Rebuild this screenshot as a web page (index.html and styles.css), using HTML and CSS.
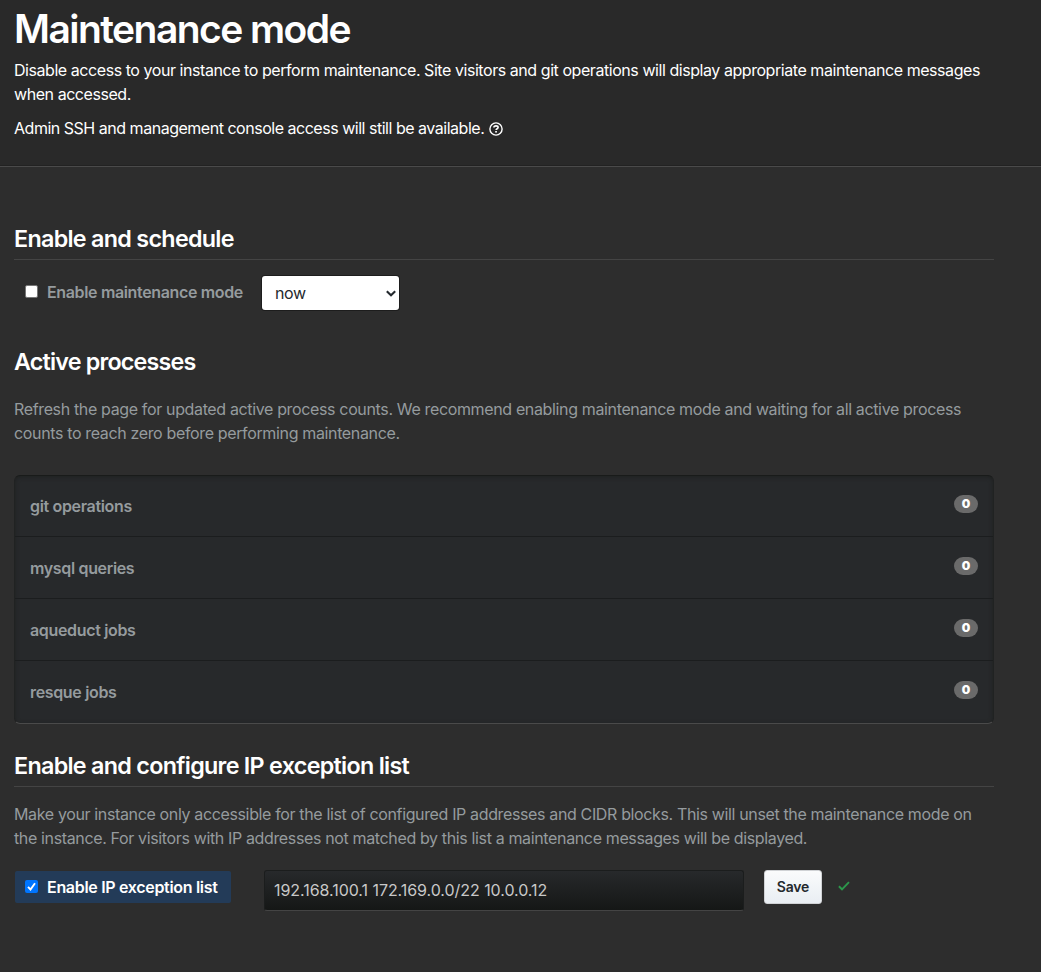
FILE: index.html
```html
<!DOCTYPE html>
<html lang="en">
<head>
<meta charset="utf-8">
<title>Maintenance mode</title>
<link rel="stylesheet" href="styles.css">
</head>
<body>
<header class="page-head">
  <h1 class="title">Maintenance mode</h1>
  <p class="lead">Disable access to your instance to perform maintenance. Site visitors and git operations will display appropriate maintenance messages<br>when accessed.</p>
  <p class="lead note">Admin SSH and management console access will still be available.
    <svg class="help" viewBox="0 0 14 14" width="14" height="14"><circle cx="7" cy="7" r="6.1" fill="none" stroke="currentColor" stroke-width="1.4"/><path d="M4.9 5.6C4.9 4.4 5.9 3.9 7 3.9s2.1.6 2.1 1.6C9.1 6.8 7.1 6.7 7.1 8.1" fill="none" stroke="currentColor" stroke-width="1.6"/><rect x="6.2" y="9" width="1.7" height="1.6" fill="currentColor"/></svg>
  </p>
</header>
<main class="content">
  <section class="schedule">
    <h2 class="heading ruled">Enable and schedule</h2>
    <div class="row">
      <label class="toggle"><span class="box"></span><span class="toggle-text">Enable maintenance mode</span></label>
      <div class="select"><span>now</span><svg width="10" height="7" viewBox="0 0 10 7"><path d="M.8 1.2l4.2 4 4.2-4" fill="none" stroke="currentColor" stroke-width="2.1"/></svg></div>
    </div>
  </section>
  <section class="processes">
    <h2 class="heading narrow">Active processes</h2>
    <p class="text t-processes">Refresh the page for updated active process counts. We recommend enabling maintenance mode and waiting for all active process<br>counts to reach zero before performing maintenance.</p>
    <ul class="list">
      <li class="item"><span>git operations</span><b class="count">0</b></li>
      <li class="item"><span>mysql queries</span><b class="count">0</b></li>
      <li class="item"><span>aqueduct jobs</span><b class="count">0</b></li>
      <li class="item"><span>resque jobs</span><b class="count">0</b></li>
    </ul>
  </section>
  <section class="exceptions">
    <h2 class="heading ruled">Enable and configure IP exception list</h2>
    <p class="text t-exceptions">Make your instance only accessible for the list of configured IP addresses and CIDR blocks. This will unset the maintenance mode on<br>the instance. For visitors with IP addresses not matched by this list a maintenance messages will be displayed.</p>
    <div class="form">
      <label class="toggle active"><span class="box checked"><svg width="13" height="13" viewBox="0 0 13 13"><path d="M3 6.9l2.5 2.6L10 3.2" fill="none" stroke="#fff" stroke-width="1.9"/></svg></span><span class="toggle-text">Enable IP exception list</span></label>
      <div class="field">192.168.100.1 172.169.0.0/22 10.0.0.12</div>
      <button class="save">Save</button>
      <svg class="ok" width="12" height="10" viewBox="0 0 12 10"><path d="M.9 5.3l3.1 3L11 1.2" fill="none" stroke="#2c974b" stroke-width="1.9"/></svg>
    </div>
  </section>
</main>
</body>
</html>
```

FILE: styles.css
```css
* { box-sizing: border-box; }
body {
  margin: 0;
  min-height: 972px;
  background: #2d2d2d;
  color: #959b9e;
  font: 16px/24px Inter, "Liberation Sans", sans-serif;
  white-space: nowrap;
}
h1, h2, p, ul { margin: 0; padding: 0; }
.page-head {
  height: 167px;
  padding: 5px 14px 0;
  background: #292929;
  border-bottom: 1px solid #4a4a4a;
  box-shadow: inset 0 -1px #222;
  color: #fff;
}
.title { height: 50px; font-size: 39px; line-height: 48px; font-weight: 600; letter-spacing: -1.55px; }
.lead { margin-top: 3px; letter-spacing: -0.442px; }
.note { display: flex; align-items: center; gap: 5px; margin-top: 10px; letter-spacing: -0.48px; }
.help { margin-top: 2px; }
.content { width: 994px; padding-left: 14px; }
.schedule { padding-top: 56px; }
.heading { height: 32px; color: #fff; font-size: 23.3px; line-height: 32px; font-weight: 600; letter-spacing: -0.7px; }
.narrow { letter-spacing: -0.8px; }
.ruled { height: 37px; border-bottom: 1px solid #444; }
.row { display: flex; height: 52px; padding: 16px 0 0 1px; }
.toggle { display: flex; align-items: center; height: 32px; padding-left: 10px; font-weight: 600; letter-spacing: -0.35px; }
.box { width: 13px; height: 13px; margin-right: 9px; background: #fff; border: 1px solid #767676; border-radius: 2px; }
.box { margin-top: -1px; }
.row .toggle { width: 247px; }
.select {
  display: flex; align-items: center; justify-content: space-between;
  width: 137px; height: 34px; padding: 0 3px 0 13px;
  background: #fff; color: #24292e; border-radius: 3px;
  box-shadow: 0 0 0 1px #1d1d1d; letter-spacing: -0.4px;
}
.processes { padding-top: 34px; }
.text { letter-spacing: -0.355px; }
.t-processes { margin-top: 19px; }
.list {
  margin-top: 30px; height: 249px; list-style: none;
  background: #27292b; border: 1px solid #202222; border-top-color: #191b1a; border-bottom-color: #4a4a4a;
  border-radius: 6px; box-shadow: inset 0 1px 4px #1f2120;
}
.item { display: flex; justify-content: space-between; height: 62px; padding: 19px 15px 0; font-weight: 600; letter-spacing: -0.34px; border-bottom: 1px solid #1b1d1e; }
.item:first-child { height: 61px; padding-top: 18px; }
.item:last-child { border-bottom: 0; }
.count { width: 24px; height: 18px; margin-top: 1px; border-radius: 9px; background: #6a6a6a; color: #fff; font-size: 12px; line-height: 18px; text-align: center; letter-spacing: 0; }
.exceptions { padding-top: 26px; }
.t-exceptions { margin-top: 15px; letter-spacing: -0.36px; }
.form { display: flex; align-items: flex-start; margin-top: 20px; }
.active { width: 216px; margin: 1px 33px 0 1px; background: #233b58; border-radius: 2px; color: #fff; letter-spacing: -0.31px; }
.checked { background: #0075ff; border: 0; }
.checked svg { display: block; }
.field {
  width: 480px; height: 41px; padding: 0 9px; font-size: 16px; line-height: 38px; color: #c8c8c8; letter-spacing: -0.05px;
  background: linear-gradient(#27292b, #151716); border: 1px solid #1b1d1d; border-bottom-color: #444; border-radius: 3px;
}
.save {
  width: 58px; height: 34px; margin-left: 20px; padding: 0; border: 1px solid #d0d2d5; border-radius: 3px;
  background: linear-gradient(#fafbfc, #e9eef3); color: #24292e; font: 600 14px/20px Inter, "Liberation Sans", sans-serif; letter-spacing: -0.2px;
}
.ok { margin: 11px 0 0 16px; }
```
